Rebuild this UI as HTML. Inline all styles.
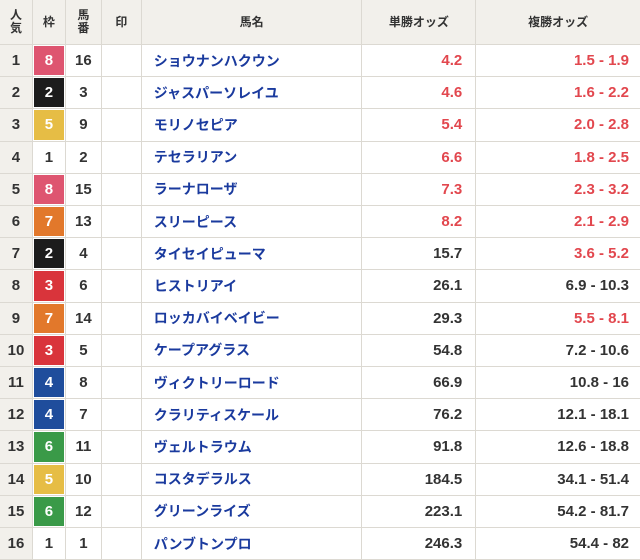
<!DOCTYPE html>
<html><head><meta charset="utf-8"><style>
*{margin:0;padding:0;box-sizing:border-box}
body{width:640px;height:560px;overflow:hidden;background:#fff;font-family:"Liberation Sans","Noto Sans CJK JP",sans-serif;font-weight:bold;color:#333}
.r{position:absolute;left:0;width:640px;display:flex;border-bottom:1px solid #dcd9d2}
.c{border-right:1px solid #dcd9d2;display:flex;align-items:center;justify-content:center;font-size:15px;height:100%}
.c1{width:33px;background:#f2f0eb}.c2{width:33px}.c3{width:36px}.c4{width:40px}.c5{width:221px;justify-content:flex-start;padding-left:12px;color:#1a3a9e;font-size:14px}
.c6{width:114px;justify-content:flex-end;padding-right:13px}.c7{width:164px;justify-content:flex-end;padding-right:11px;border-right:none}
.h .c{background:#f2f0eb;font-size:12px;color:#333;line-height:13px;text-align:center}
.w{padding:1px}.w span{display:flex;width:100%;height:100%;align-items:center;justify-content:center}
.red{color:#e2474e}
</style></head><body>
<div class="r h" style="top:0;height:45px">
<div class="c c1">人<br>気</div><div class="c c2">枠</div><div class="c c3">馬<br>番</div><div class="c c4">印</div><div class="c c5" style="justify-content:center;padding:0;color:#333;font-size:12px">馬名</div><div class="c c6" style="justify-content:center;padding:0">単勝オッズ</div><div class="c c7" style="justify-content:center;padding:0">複勝オッズ</div>
</div>
<div id="rows"></div>
<script>
var d=[[1,8,16,"ショウナンハクウン","4.2","1.5 - 1.9",1,1],[2,2,3,"ジャスパーソレイユ","4.6","1.6 - 2.2",1,1],[3,5,9,"モリノセピア","5.4","2.0 - 2.8",1,1],[4,1,2,"テセラリアン","6.6","1.8 - 2.5",1,1],[5,8,15,"ラーナローザ","7.3","2.3 - 3.2",1,1],[6,7,13,"スリーピース","8.2","2.1 - 2.9",1,1],[7,2,4,"タイセイピューマ","15.7","3.6 - 5.2",0,1],[8,3,6,"ヒストリアイ","26.1","6.9 - 10.3",0,0],[9,7,14,"ロッカバイベイビー","29.3","5.5 - 8.1",0,1],[10,3,5,"ケープアグラス","54.8","7.2 - 10.6",0,0],[11,4,8,"ヴィクトリーロード","66.9","10.8 - 16",0,0],[12,4,7,"クラリティスケール","76.2","12.1 - 18.1",0,0],[13,6,11,"ヴェルトラウム","91.8","12.6 - 18.8",0,0],[14,5,10,"コスタデラルス","184.5","34.1 - 51.4",0,0],[15,6,12,"グリーンライズ","223.1","54.2 - 81.7",0,0],[16,1,1,"パンブトンプロ","246.3","54.4 - 82",0,0]];
var col={1:["#fff","#333"],2:["#1c1c1c","#fff"],3:["#d9343b","#fff"],4:["#1f4d9c","#fff"],5:["#e6bd45","#fff"],6:["#3a9a48","#fff"],7:["#e2782b","#fff"],8:["#de5570","#fff"]};
var h="";d.forEach(function(x,i){var t=45+i*32.2;var c=col[x[1]];
h+='<div class="r" style="top:'+t+'px;height:32.2px"><div class="c c1">'+x[0]+'</div><div class="c c2 w"><span style="background:'+c[0]+';color:'+c[1]+'">'+x[1]+'</span></div><div class="c c3">'+x[2]+'</div><div class="c c4"></div><div class="c c5">'+x[3]+'</div><div class="c c6'+(x[6]?' red':'')+'">'+x[4]+'</div><div class="c c7'+(x[7]?' red':'')+'">'+x[5]+'</div></div>';});
document.getElementById("rows").innerHTML=h;
</script>
</body></html>
